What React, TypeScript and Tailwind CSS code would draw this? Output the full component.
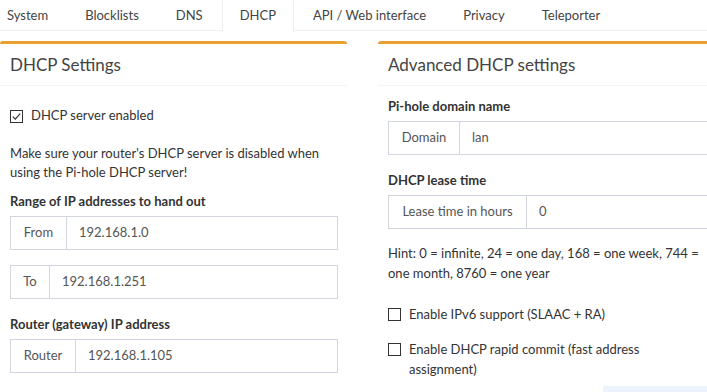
import React from "react";

const font = { fontFamily: "Lato, 'Noto Sans', sans-serif" };

function Tab({ label, active }: { label: string; active?: boolean }) {
  return (
    <div
      className={
        "h-[31px] px-[17px] mr-[1px] flex items-center text-[13px] text-[#444] border-x " +
        (active ? "border-[#eeeeee] bg-white h-[32px] -mb-[1px]" : "border-transparent")
      }
    >
      {label}
    </div>
  );
}

function Check({ checked }: { checked?: boolean }) {
  return (
    <svg width="13" height="13" viewBox="0 0 13 13" className="shrink-0">
      <rect x="0.5" y="0.5" width="12" height="12" fill="white" stroke="#333" strokeWidth="1" />
      {checked && <path d="M2.8 6.6 L5.3 9.1 L10.2 3.6" fill="none" stroke="#333" strokeWidth="1.2" />}
    </svg>
  );
}

function InputGroup({ addon, value, addonW }: { addon: string; value: string; addonW: string }) {
  return (
    <div className="flex h-[34px] border border-[#d2d6de] text-[13px]">
      <div className={"flex items-center justify-center border-r border-[#d2d6de] text-[#555] " + addonW}>{addon}</div>
      <div className="flex items-center pl-[12px] text-[#555]">{value}</div>
    </div>
  );
}

export default function App() {
  return (
    <div className="w-[707px] h-[392px] overflow-hidden bg-white text-[#333] relative" style={font}>
      <div className="flex h-[31px] border-b border-[#f0f0f0] ml-[-11px]">
        <Tab label="System" />
        <Tab label="Blocklists" />
        <Tab label="DNS" />
        <Tab label="DHCP" active />
        <Tab label="API / Web interface" />
        <Tab label="Privacy" />
        <Tab label="Teleporter" />
      </div>
      <div className="flex gap-[31px] mt-[10px]">
        <div className="w-[347px] shrink-0 border-t-[3px] border-[#e8a131] rounded-t-[3px]">
          <div className="h-[42px] flex items-center px-[10px] text-[17px] text-[#444] border-b border-[#f4f4f4]">
            DHCP Settings
          </div>
          <div className="px-[10px]">
            <div className="flex items-center gap-[8px] mt-[23px] h-[14px] text-[13px]">
              <Check checked />
              <span>DHCP server enabled</span>
            </div>
            <p className="mt-[21px] text-[13px] leading-[19px]">
              Make sure your router's DHCP server is disabled when using the Pi-hole DHCP server!
            </p>
            <div className="mt-[10px] text-[13px] font-bold leading-[19px]">Range of IP addresses to hand out</div>
            <div className="mt-[5px] w-[328px]">
              <InputGroup addon="From" value="192.168.1.0" addonW="w-[56px]" />
            </div>
            <div className="mt-[15px] w-[328px]">
              <InputGroup addon="To" value="192.168.1.251" addonW="w-[39px]" />
            </div>
            <div className="mt-[16px] text-[13px] font-bold leading-[19px]">Router (gateway) IP address</div>
            <div className="mt-[5px] w-[328px]">
              <InputGroup addon="Router" value="192.168.1.105" addonW="w-[65px]" />
            </div>
          </div>
        </div>
        <div className="w-[348px] shrink-0 border-t-[3px] border-[#e8a131] rounded-t-[3px]">
          <div className="h-[42px] flex items-center px-[10px] text-[17px] text-[#444] border-b border-[#f4f4f4]">
            Advanced DHCP settings
          </div>
          <div className="px-[10px]">
            <div className="mt-[11px] text-[13px] font-bold leading-[19px]">Pi-hole domain name</div>
            <div className="mt-[5px]">
              <InputGroup addon="Domain" value="lan" addonW="w-[71px]" />
            </div>
            <div className="mt-[16px] text-[13px] font-bold leading-[19px]">DHCP lease time</div>
            <div className="mt-[5px]">
              <InputGroup addon="Lease time in hours" value="0" addonW="w-[138px]" />
            </div>
            <p className="mt-[14px] text-[13px] leading-[20px]">
              Hint: 0 = infinite, 24 = one day, 168 = one week, 744 = one month, 8760 = one year
            </p>
            <div className="flex items-center gap-[8px] mt-[21px] text-[13px] leading-[20px]">
              <Check />
              <span>Enable IPv6 support (SLAAC + RA)</span>
            </div>
            <div className="flex items-start gap-[8px] mt-[15px] text-[13px] leading-[20px] pr-[30px]">
              <div className="pt-[4px]"><Check /></div>
              <span>Enable DHCP rapid commit (fast address assignment)</span>
            </div>
          </div>
        </div>
      </div>
      <div className="absolute left-[603px] top-[386px] w-[104px] h-[6px] bg-[#edf3fc]" />
    </div>
  );
}
